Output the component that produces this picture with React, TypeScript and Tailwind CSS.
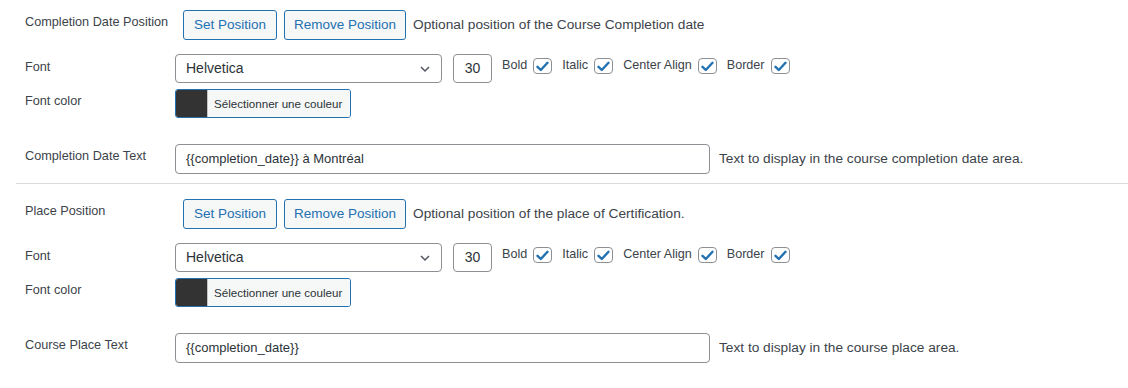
import React from "react";

const FONT = { fontFamily: '"Liberation Sans", Arial, sans-serif' };

function Check() {
  return (
    <span className="inline-flex items-center justify-center w-[19px] h-[16px] rounded-[4px] border border-[#8c8f94] bg-white">
      <svg width="13" height="11" viewBox="0 0 13 11">
        <path d="M1.5 5.8 L4.8 9 L11.5 1.8" fill="none" stroke="#2271b1" strokeWidth="2.4" strokeLinecap="round" strokeLinejoin="round" />
      </svg>
    </span>
  );
}

function CheckItem({ label }: { label: string }) {
  return (
    <label className="flex items-center gap-[6px] text-[12.6px] text-[#3c434a] mr-[10px]">
      <span className="-mt-[2px]">{label}</span>
      <Check />
    </label>
  );
}

function Label({ children, pt }: { children: React.ReactNode; pt: string }) {
  return <div className={`w-[150px] shrink-0 text-[12.7px] text-[#3c434a] ${pt}`}>{children}</div>;
}

function Section({ name, desc, label, text, textDesc, last }: { name: string; desc: string; label: string; text: string; textDesc: string; last?: boolean }) {
  return (
    <div className={last ? "pt-[15px]" : "pt-[10px]"}>
      {/* position row */}
      <div className="flex items-start pl-[25px]">
        <Label pt="pt-[3px]">{name}</Label>
        <div className="flex items-center ml-[8px] h-[30px]">
          <button className="w-[94px] h-[30px] rounded-[3px] border border-[#2271b1] bg-[#f6f7f7] text-[#2271b1] text-[13.5px]">Set Position</button>
          <button className="w-[122px] h-[30px] ml-[7px] rounded-[3px] border border-[#2271b1] bg-[#f6f7f7] text-[#2271b1] text-[13.5px]">Remove Position</button>
          <span className="ml-[7px] text-[13.7px] text-[#3c434a]">{desc}</span>
        </div>
      </div>

      {/* font row */}
      <div className="flex items-start pl-[25px] mt-[14px]">
        <Label pt="pt-[4px]">Font</Label>
        <div className="flex items-start">
          <div className="w-[267px] h-[29px] rounded-[4px] border border-[#8c8f94] bg-white flex items-center justify-between pl-[10px] pr-[10px] text-[14px] text-[#2c3338]">
            <span>Helvetica</span>
            <svg width="12" height="8" viewBox="0 0 12 8">
              <path d="M2 2 L6 6 L10 2" fill="none" stroke="#50575e" strokeWidth="1.5" />
            </svg>
          </div>
          <div className="w-[39px] h-[29px] ml-[11px] rounded-[4px] border border-[#8c8f94] bg-white flex items-center justify-center text-[14px] text-[#2c3338]">30</div>
          <div className="flex items-center ml-[10px] pt-[4px]">
            <CheckItem label="Bold" />
            <CheckItem label="Italic" />
            <CheckItem label="Center Align" />
            <CheckItem label="Border" />
          </div>
        </div>
      </div>

      {/* color row */}
      <div className="flex items-start pl-[25px] mt-[6px]">
        <Label pt="pt-[3px]">Font color</Label>
        <div className="flex w-[176px] h-[29px] rounded-[3px] border border-[#2271b1] overflow-hidden">
          <span className="w-[31px] bg-[#333333]" />
          <span className="flex-1 bg-[#f6f7f7] flex items-center pl-[6px] text-[11.6px] text-[#2c3338] border-l border-[#c3c4c7]">Sélectionner une couleur</span>
        </div>
      </div>

      {/* text row */}
      <div className="flex items-start pl-[25px] mt-[26px]">
        <Label pt="pt-[3px]">{label}</Label>
        <div className="flex items-center">
          <div className="w-[535px] h-[30px] rounded-[4px] border border-[#8c8f94] bg-white flex items-center pl-[10px] text-[13px] text-[#2c3338]">{text}</div>
          <span className="ml-[9px] text-[13.7px] text-[#3c434a]">{textDesc}</span>
        </div>
      </div>

      {!last && <div className="ml-[16px] mt-[9px] h-px bg-[#dcdcde]" />}
    </div>
  );
}

export default function App() {
  return (
    <div className="w-[1128px] h-[388px] bg-white overflow-hidden" style={FONT}>
      <Section
        name="Completion Date Position"
        desc="Optional position of the Course Completion date"
        label="Completion Date Text"
        text="{{completion_date}} à Montréal"
        textDesc="Text to display in the course completion date area."
      />
      <Section
        name="Place Position"
        desc="Optional position of the place of Certification."
        label="Course Place Text"
        text="{{completion_date}}"
        textDesc="Text to display in the course place area."
        last
      />
    </div>
  );
}
